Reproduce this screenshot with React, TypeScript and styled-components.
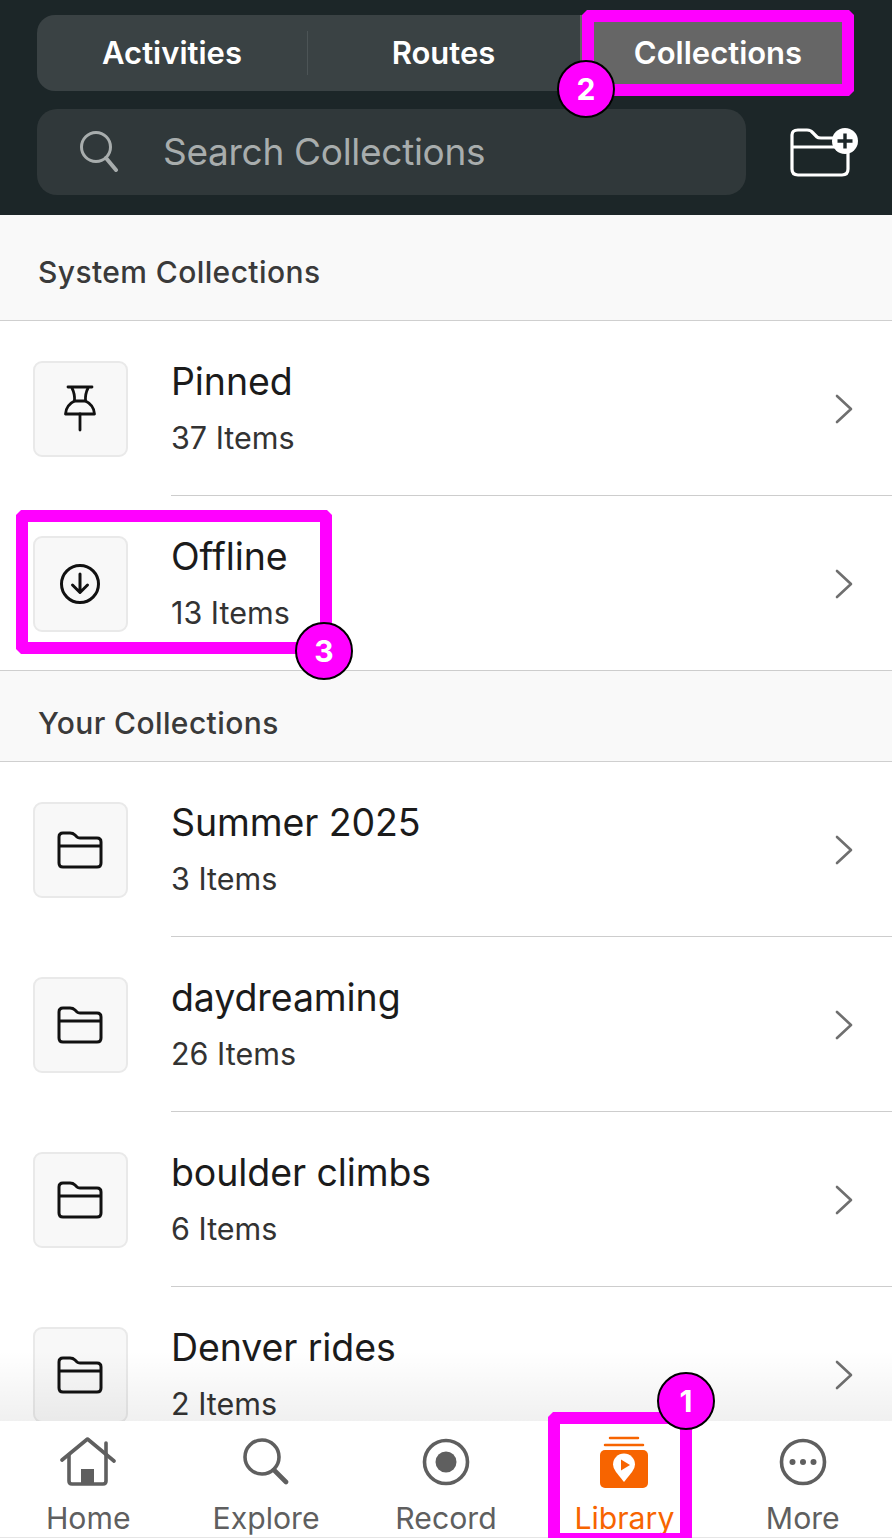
import styled, { createGlobalStyle } from "styled-components";

const GlobalStyle = createGlobalStyle`
  html, body {
    margin: 0;
    padding: 0;
    background: #fff;
    font-family: Inter, "Liberation Sans", sans-serif;
  }
  * { box-sizing: border-box; }
`;

const Page = styled.div`
  position: relative;
  width: 892px;
  height: 1538px;
  display: flex;
  flex-direction: column;
  overflow: hidden;
  background: #fff;
`;

const Header = styled.header`
  height: 215px;
  flex: none;
  background: #1c2628;
  padding: 15px 0 0 37px;
  display: flex;
  flex-direction: column;
  gap: 18px;
`;

const Segments = styled.div`
  height: 76px;
  width: 812px;
  display: flex;
  background: #3a4244;
  border-radius: 18px;
  overflow: hidden;
`;

const Segment = styled.div<{ $width: number; $active?: boolean; $divider?: boolean }>`
  width: ${(p) => p.$width}px;
  flex: none;
  display: flex;
  align-items: center;
  justify-content: center;
  padding-bottom: 2px;
  color: #fff;
  font-size: 31px;
  font-weight: 600;
  position: relative;
  background: ${(p) => (p.$active ? "#666666" : "transparent")};
  ${(p) =>
    p.$divider &&
    `&::after {
      content: "";
      position: absolute;
      right: -1px;
      top: 16px;
      bottom: 16px;
      width: 1px;
      background: #4c5456;
    }`}
`;

const SearchRow = styled.div`
  display: flex;
  align-items: center;
`;

const SearchBox = styled.div`
  width: 709px;
  height: 86px;
  flex: none;
  border-radius: 20px;
  background: #30383a;
  display: flex;
  align-items: center;
  padding-left: 42px;
  padding-bottom: 2px;
  gap: 44px;
  color: #a8adad;
  font-size: 37px;
  letter-spacing: -0.3px;
`;

const NewFolder = styled.div`
  margin-left: 43px;
  width: 72px;
  height: 52px;
  flex: none;
  display: flex;
`;

const List = styled.main`
  flex: 1;
  overflow: hidden;
  position: relative;
  &::after {
    content: "";
    position: absolute;
    left: 0;
    right: 0;
    bottom: 0;
    height: 70px;
    background: linear-gradient(to bottom, rgba(0, 0, 0, 0), rgba(0, 0, 0, 0.06));
  }
`;

const SectionHead = styled.div<{ $height: number; $top: number; $line?: boolean }>`
  height: ${(p) => p.$height}px;
  background: #f9f9f9;
  border-bottom: 1px solid #cfcfcf;
  box-shadow: ${(p) => (p.$line ? "0 -1px 0 #cfcfcf" : "none")};
  display: flex;
  align-items: center;
  padding: ${(p) => p.$top}px 38px 0;
  color: #3a3a3a;
  font-size: 30px;
  font-weight: 500;
  letter-spacing: 0.4px;
`;

const Row = styled.div`
  height: 175px;
  display: flex;
  align-items: center;
  padding-left: 33px;
  padding-right: 39px;
  background: #fff;
`;

const Thumb = styled.div`
  width: 95px;
  height: 96px;
  flex: none;
  margin-top: 2px;
  border: 2px solid #e9e9e9;
  border-radius: 9px;
  background: #f8f8f8;
  display: flex;
  align-items: center;
  justify-content: center;
  padding-right: 2px;
`;

const RowBody = styled.div`
  flex: 1;
  align-self: stretch;
  margin-left: 43px;
  margin-right: -39px;
  padding-right: 39px;
  display: flex;
  align-items: center;
  justify-content: space-between;
  border-bottom: 1px solid #cdcdcd;
`;

const RowText = styled.div`
  display: flex;
  flex-direction: column;
  gap: 17px;
`;

const Title = styled.div`
  color: #1b1b1b;
  font-size: 37.5px;
  line-height: 44px;
  letter-spacing: -0.1px;
`;

const Sub = styled.div`
  color: #333;
  font-size: 30.5px;
  line-height: 34px;
`;

const ChevronSlot = styled.div`
  display: flex;
  margin-top: 2px;
`;

const TabBar = styled.nav`
  height: 117px;
  flex: none;
  display: grid;
  grid-template-columns: repeat(5, 1fr);
  background: #fff;
  border-bottom: 1px solid #e6e6e6;
  position: relative;
`;

const Tab = styled.div<{ $active?: boolean; $nudge?: number }>`
  display: flex;
  flex-direction: column;
  align-items: center;
  padding-top: 14px;
  padding-right: ${(p) => p.$nudge ?? 0}px;
  color: ${(p) => (p.$active ? "#f76400" : "#5f5f5f")};
  font-size: 30.2px;
  line-height: 36px;
`;

const TabIcon = styled.div`
  height: 54px;
  margin-bottom: 11px;
  display: flex;
  align-items: center;
`;

const Highlight = styled.div<{ $x: number; $y: number; $w: number; $h: number }>`
  position: absolute;
  left: ${(p) => p.$x}px;
  top: ${(p) => p.$y}px;
  width: ${(p) => p.$w}px;
  height: ${(p) => p.$h}px;
  border: 12px solid #ff00ff;
  clip-path: polygon(
    5px 0,
    calc(100% - 5px) 0,
    100% 5px,
    100% calc(100% - 5px),
    calc(100% - 5px) 100%,
    5px 100%,
    0 calc(100% - 5px),
    0 5px
  );
`;

const Badge = styled.div<{ $cx: number; $cy: number }>`
  position: absolute;
  left: ${(p) => p.$cx - 29}px;
  top: ${(p) => p.$cy - 29}px;
  width: 58px;
  height: 58px;
  border-radius: 50%;
  background: #ff00ff;
  border: 2px solid #000;
  color: #fff;
  font-size: 30px;
  font-weight: 700;
  display: flex;
  align-items: center;
  justify-content: center;
`;

const SearchIcon = () => (
  <svg width="40" height="42" viewBox="0 0 40 42" fill="none" stroke="#a8adad" strokeWidth="3" strokeLinecap="round">
    <circle cx="17" cy="17" r="14.5" />
    <path d="M27 28 L37 40" strokeWidth="4" />
  </svg>
);

const NewFolderIcon = () => (
  <svg width="72" height="52" viewBox="0 0 72 52" fill="none">
    <path
      d="M59 24 V43 Q59 49 53 49 H9 Q3 49 3 43 V9 Q3 4 9 4 H18 Q22 4 24 7 L28 11 Q29 12 32 12 H48 M3 21 H48"
      stroke="#fff"
      strokeWidth="3.2"
      strokeLinecap="round"
    />
    <circle cx="56" cy="15" r="13" fill="#fff" />
    <path d="M56 7.5 V22.5 M48.5 15 H63.5" stroke="#1c2628" strokeWidth="3.4" />
  </svg>
);

const PinIcon = () => (
  <svg width="34" height="48" viewBox="0 0 34 48" fill="none" stroke="#111" strokeWidth="2.8" strokeLinejoin="round" strokeLinecap="round">
    <path d="M5 2 H29" />
    <path d="M9 3 Q12 9 11.5 16 Q3 20 2.5 29 H31.5 Q31 20 22.5 16 Q22 9 25 3" />
    <path d="M11.5 16 H22.5" />
    <path d="M17 29 V45" />
  </svg>
);

const DownloadIcon = () => (
  <svg width="42" height="42" viewBox="0 0 42 42" fill="none" stroke="#111" strokeWidth="3" strokeLinecap="round" strokeLinejoin="round">
    <circle cx="21" cy="21" r="18.5" />
    <path d="M21 11 V29 M13.5 22 L21 29.5 L28.5 22" />
  </svg>
);

const FolderIcon = () => (
  <svg width="46" height="38" viewBox="0 0 46 38" fill="none" stroke="#111" strokeWidth="3" strokeLinejoin="round">
    <path d="M2 6 Q2 2 6 2 H13 Q16 2 18 4 L20 6 Q21 7 23 7 H40 Q44 7 44 11 V32 Q44 36 40 36 H6 Q2 36 2 32 Z" />
    <path d="M2 15 H44" />
  </svg>
);

const Chevron = () => (
  <svg width="18" height="30" viewBox="0 0 18 30" fill="none" stroke="#6f6f6f" strokeWidth="2.6" strokeLinecap="round" strokeLinejoin="round">
    <path d="M2 2 L16 15 L2 28" />
  </svg>
);

const HomeIcon = () => (
  <svg width="56" height="50" viewBox="0 0 56 50" fill="none" stroke="#5f5f5f" strokeWidth="3.6" strokeLinecap="round" strokeLinejoin="round">
    <path d="M2 23 L27.5 2 L54 24" />
    <path d="M9 18 V44 Q9 47 12 47 H43 Q46 47 46 44 V17" />
    <path d="M46 17 V6" />
    <rect x="21" y="32" width="13" height="14" fill="#5f5f5f" stroke="none" />
  </svg>
);

const ExploreIcon = () => (
  <svg width="46" height="48" viewBox="0 0 46 48" fill="none" stroke="#5f5f5f" strokeWidth="3.6" strokeLinecap="round">
    <circle cx="19" cy="19" r="17" />
    <path d="M31 32 L43 44" strokeWidth="4.6" />
  </svg>
);

const RecordIcon = () => (
  <svg width="48" height="48" viewBox="0 0 48 48" fill="none">
    <circle cx="24" cy="24" r="21.5" stroke="#5f5f5f" strokeWidth="3.6" />
    <circle cx="24" cy="24" r="10.5" fill="#5f5f5f" />
  </svg>
);

const LibraryIcon = () => (
  <svg width="48" height="52" viewBox="0 0 48 52" fill="none">
    <path d="M10 2 H38" stroke="#f76400" strokeWidth="2.5" strokeLinecap="round" />
    <path d="M5 9 H43" stroke="#f76400" strokeWidth="2.5" strokeLinecap="round" />
    <rect x="0" y="14" width="48" height="38" rx="5" fill="#f76400" />
    <path d="M24 46 L16 36 Q13 32 13 28.5 A11 11 0 0 1 35 28.5 Q35 32 32 36 Z" fill="#fff" />
    <path d="M21 23.5 L30 29 L21 34.5 Z" fill="#f76400" />
  </svg>
);

const MoreIcon = () => (
  <svg width="48" height="48" viewBox="0 0 48 48" fill="none">
    <circle cx="24" cy="24" r="21.5" stroke="#5f5f5f" strokeWidth="3.6" />
    <circle cx="13.5" cy="24" r="3" fill="#5f5f5f" />
    <circle cx="24" cy="24" r="3" fill="#5f5f5f" />
    <circle cx="34.5" cy="24" r="3" fill="#5f5f5f" />
  </svg>
);

const yourCollections = [
  { name: "Summer 2025", count: "3 Items" },
  { name: "daydreaming", count: "26 Items" },
  { name: "boulder climbs", count: "6 Items" },
  { name: "Denver rides", count: "2 Items" },
];

const CollectionRow = ({
  icon,
  name,
  count,
}: {
  icon: React.ReactNode;
  name: string;
  count: string;
}) => (
  <Row>
    <Thumb>{icon}</Thumb>
    <RowBody>
      <RowText>
        <Title>{name}</Title>
        <Sub>{count}</Sub>
      </RowText>
      <ChevronSlot>
        <Chevron />
      </ChevronSlot>
    </RowBody>
  </Row>
);

const App = () => {
  return (
    <Page>
      <GlobalStyle />
      <Header>
        <Segments>
          <Segment $width={270} $divider>Activities</Segment>
          <Segment $width={273}>Routes</Segment>
          <Segment $width={276} $active>Collections</Segment>
        </Segments>
        <SearchRow>
          <SearchBox>
            <SearchIcon />
            Search Collections
          </SearchBox>
          <NewFolder>
            <NewFolderIcon />
          </NewFolder>
        </SearchRow>
      </Header>
      <List>
        <SectionHead $height={105.5} $top={9}>System Collections</SectionHead>
        <CollectionRow icon={<PinIcon />} name="Pinned" count="37 Items" />
        <CollectionRow icon={<DownloadIcon />} name="Offline" count="13 Items" />
        <SectionHead $height={91} $top={14} $line>Your Collections</SectionHead>
        {yourCollections.map((c) => (
          <CollectionRow key={c.name} icon={<FolderIcon />} name={c.name} count={c.count} />
        ))}
      </List>
      <TabBar>
        <Tab $nudge={2}><TabIcon><HomeIcon /></TabIcon>Home</Tab>
        <Tab $nudge={3}><TabIcon><ExploreIcon /></TabIcon>Explore</Tab>
        <Tab><TabIcon><RecordIcon /></TabIcon>Record</Tab>
        <Tab $active><TabIcon><LibraryIcon /></TabIcon>Library</Tab>
        <Tab><TabIcon><MoreIcon /></TabIcon>More</Tab>
      </TabBar>
      <Highlight $x={582} $y={10} $w={272} $h={86} />
      <Highlight $x={16} $y={510} $w={316} $h={144} />
      <Highlight $x={548} $y={1412} $w={144} $h={133} />
      <Badge $cx={586} $cy={89}>2</Badge>
      <Badge $cx={324} $cy={651}>3</Badge>
      <Badge $cx={686} $cy={1401}>1</Badge>
    </Page>
  );
};

export default App;
